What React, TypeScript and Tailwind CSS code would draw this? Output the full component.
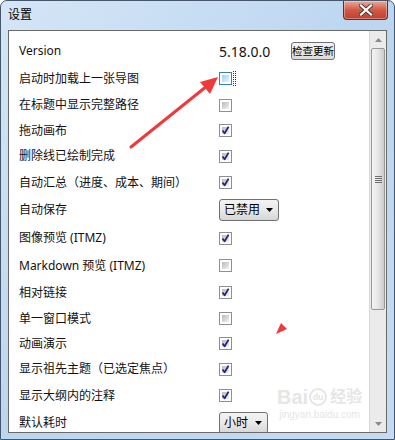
import React from "react";

const FONT = '"Noto Sans", "Noto Sans CJK SC", sans-serif';

type Ctrl =
  | { kind: "check"; checked: boolean; hover?: boolean }
  | { kind: "select"; value: string; wide: boolean }
  | { kind: "version" };

const rows: { label: string; h: string; ctrl: Ctrl }[] = [
  { label: "Version", h: "h-[28px]", ctrl: { kind: "version" } },
  { label: "启动时加载上一张导图", h: "h-[27px]", ctrl: { kind: "check", checked: false, hover: true } },
  { label: "在标题中显示完整路径", h: "h-[26px]", ctrl: { kind: "check", checked: false } },
  { label: "拖动画布", h: "h-[25px]", ctrl: { kind: "check", checked: true } },
  { label: "删除线已绘制完成", h: "h-[26px]", ctrl: { kind: "check", checked: true } },
  { label: "自动汇总（进度、成本、期间）", h: "h-[27px]", ctrl: { kind: "check", checked: true } },
  { label: "自动保存", h: "h-[28px]", ctrl: { kind: "select", value: "已禁用", wide: true } },
  { label: "图像预览 (ITMZ)", h: "h-[28px]", ctrl: { kind: "check", checked: true } },
  { label: "Markdown 预览 (ITMZ)", h: "h-[27px]", ctrl: { kind: "check", checked: false } },
  { label: "相对链接", h: "h-[27px]", ctrl: { kind: "check", checked: true } },
  { label: "单一窗口模式", h: "h-[25px]", ctrl: { kind: "check", checked: false } },
  { label: "动画演示", h: "h-[25px]", ctrl: { kind: "check", checked: true } },
  { label: "显示祖先主题（已选定焦点）", h: "h-[26px]", ctrl: { kind: "check", checked: true } },
  { label: "显示大纲内的注释", h: "h-[27px]", ctrl: { kind: "check", checked: true } },
  { label: "默认耗时", h: "h-[28px]", ctrl: { kind: "select", value: "小时", wide: false } },
];

function CheckBox({ checked, hover }: { checked: boolean; hover?: boolean }) {
  return (
    <div className="flex items-center">
      <div
        className={`relative w-[13px] h-[13px] border p-[2px] bg-white ${
          hover ? "border-[#3c7fb1]" : "border-[#8e8f8f]"
        }`}
      >
        <div
          className={`w-full h-full bg-gradient-to-br ${
            hover ? "from-[#9fd0f2] to-[#e3f3fd]" : "from-[#b9b9b9] to-[#f2f2f2]"
          }`}
        />
        {checked && (
          <svg className="absolute left-0 top-0" width="11" height="11" viewBox="0 0 11 11">
            <path d="M2.5 5.5 L4.6 8.3 L8.6 1.6" fill="none" stroke="#23238a" strokeWidth="1.8" strokeLinejoin="round" />
          </svg>
        )}
      </div>
      {hover && <span className="ml-[1px] w-[3px] h-[15px] border border-dotted border-[#333]" />}
    </div>
  );
}

function Select({ value, wide }: { value: string; wide: boolean }) {
  return (
    <div
      className={`flex items-center justify-between h-[22px] rounded-[3px] border border-[#707070] bg-gradient-to-b from-[#f3f3f3] via-[#e9e9e9] to-[#d6d6d6] pl-[4px] pr-[5px] text-[12px] text-black ${
        wide ? "w-[60px]" : "w-[49px]"
      }`}
    >
      <span>{value}</span>
      <svg width="7" height="4" viewBox="0 0 7 4">
        <path d="M0 0 H7 L3.5 4 Z" fill="#000" />
      </svg>
    </div>
  );
}

export default function App() {
  return (
    <div
      className="relative w-[395px] h-[440px] overflow-hidden flex flex-col rounded-t-[7px] border border-[#46566a] bg-gradient-to-br from-[#d4e6f7] via-[#bcd6f0] to-[#c4dbf2]"
      style={{ fontFamily: FONT }}
    >
      {/* title bar */}
      <div className="h-[29px] flex items-start justify-between shrink-0">
        <div className="pl-[7px] pt-[6px] text-[12px] leading-[16px] text-black">设置</div>
        <div className="mr-[6px] w-[45px] h-[19px] rounded-b-[4px] border border-t-0 border-[#6b2b22] bg-gradient-to-b from-[#e9a99a] via-[#cf5a45] to-[#c0402c] flex items-center justify-center shadow-[inset_0_0_0_1px_rgba(255,255,255,0.35)]">
          <svg width="14" height="12" viewBox="0 0 14 12">
            <path d="M2 1.5 L12 10.5 M12 1.5 L2 10.5" stroke="#4a3a3a" strokeWidth="4" strokeLinecap="square" />
            <path d="M2 1.5 L12 10.5 M12 1.5 L2 10.5" stroke="#ffffff" strokeWidth="2.2" strokeLinecap="square" />
          </svg>
        </div>
      </div>

      {/* panel */}
      <div className="mx-[7px] h-[403px] shrink-0 flex border border-[#6a6a6a] bg-white">
        <div className="flex-1 pt-[6px] pl-[10px] overflow-hidden text-[12px] text-[#111]">
          {rows.map((r) => (
            <div key={r.label} className={`${r.h} flex items-center`}>
              <div className="w-[200px] whitespace-nowrap">{r.label}</div>
              {r.ctrl.kind === "check" && <CheckBox checked={r.ctrl.checked} hover={r.ctrl.hover} />}
              {r.ctrl.kind === "select" && <Select value={r.ctrl.value} wide={r.ctrl.wide} />}
              {r.ctrl.kind === "version" && (
                <div className="flex items-center">
                  <span className="w-[72px] text-[14px]">5.18.0.0</span>
                  <button className="w-[44px] h-[18px] rounded-[3px] border border-[#707070] bg-gradient-to-b from-[#f4f4f4] to-[#dcdcdc] text-[10.5px] leading-[16px] text-black">
                    检查更新
                  </button>
                </div>
              )}
            </div>
          ))}
        </div>

        {/* scrollbar */}
        <div className="w-[17px] flex flex-col border-l border-[#d8d8d8] bg-[#ebebeb]">
          <div className="h-[17px] flex items-center justify-center">
            <svg width="7" height="4" viewBox="0 0 7 4">
              <path d="M0 4 H7 L3.5 0 Z" fill="#8a8a8a" />
            </svg>
          </div>
          <div className="mx-[1px] h-[262px] rounded-[2px] border border-[#979797] bg-gradient-to-r from-[#f4f4f4] via-[#e6e6e6] to-[#cdcdcd] flex items-center justify-center">
            <div className="flex flex-col gap-[1px]">
              <div className="w-[7px] h-[1px] bg-[#6f6f6f]" />
              <div className="w-[7px] h-[1px] bg-[#6f6f6f]" />
              <div className="w-[7px] h-[1px] bg-[#6f6f6f]" />
              <div className="w-[7px] h-[1px] bg-[#6f6f6f]" />
            </div>
          </div>
          <div className="flex-1" />
          <div className="h-[17px] flex items-center justify-center">
            <svg width="7" height="4" viewBox="0 0 7 4">
              <path d="M0 0 H7 L3.5 4 Z" fill="#8a8a8a" />
            </svg>
          </div>
        </div>
      </div>

      {/* red annotation arrows */}
      <svg className="absolute left-0 top-0 pointer-events-none" width="395" height="440" viewBox="0 0 395 440">
        <path d="M130 146 L206 85" stroke="#f0393a" strokeWidth="3" strokeLinecap="round" />
        <polygon points="217,76 209,93 199,81" fill="#f0393a" />
        <polygon points="275,333 286,328 280,322" fill="#f0393a" />
      </svg>

      {/* watermark */}
      <div className="absolute left-[276px] top-[384px] pointer-events-none flex flex-col items-center text-[#e6e6e6]" style={{ fontFamily: '"Liberation Sans", "Noto Sans CJK SC", sans-serif' }}>
        <div className="flex items-center text-[20px] font-bold leading-[24px]">
          <span>Bai</span>
          <span className="mx-[1px] inline-flex w-[18px] h-[18px] rounded-full border-2 border-[#e6e6e6] items-center justify-center text-[9px] leading-none">du</span>
          <span className="ml-[2px] text-[16px]">经验</span>
        </div>
        <div className="text-[10px] leading-[12px]">jingyan.baidu.com</div>
      </div>
    </div>
  );
}
